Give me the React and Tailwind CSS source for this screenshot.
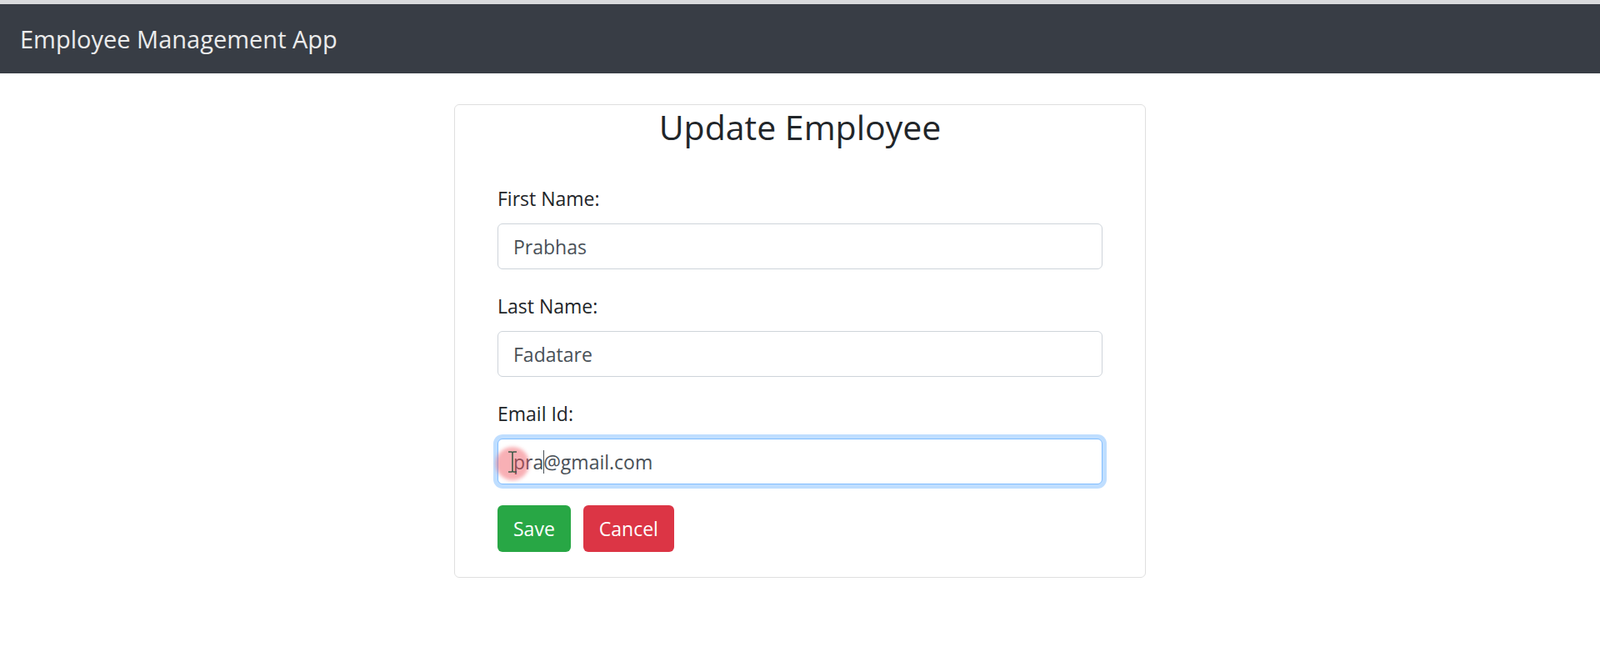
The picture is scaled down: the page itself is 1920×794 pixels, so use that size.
import { useState } from "react";

const Field = ({ label, value, onChange }) => (
  <div className="mb-[27px]">
    <label className="block text-[23px] leading-[35px] mb-[12px] text-[#212529]">{label}</label>
    <input
      type="text"
      value={value}
      onChange={onChange}
      className="w-full h-[55px] px-[18px] text-[23px] text-[#495057] bg-white border border-[#ced4da] rounded-[6px] outline-none"
    />
  </div>
);

const App = () => {
  const [firstName, setFirstName] = useState("Prabhas");
  const [lastName, setLastName] = useState("Fadatare");
  const [emailId, setEmailId] = useState("pra@gmail.com");

  return (
    <div className="min-h-screen bg-white font-['Open_Sans','Noto_Sans',sans-serif]">
      <div className="h-[5px] bg-[#d9dadc]" />

      {/* navbar */}
      <header className="h-[83px] bg-[#383d45] flex items-center px-[24px]">
        <span className="text-[29px] text-white/90">Employee Management App</span>
      </header>

      <main className="pt-[37px] flex justify-center">
        <div className="w-[830px] border border-black/[.125] rounded-[6px] px-[22px]">
          <h3 className="text-center text-[41px] leading-[52px] text-[#212529] mb-[10px]">Update Employee</h3>
          <div className="px-[29px] pt-[33px] pb-[30px]">
            <form onSubmit={(e) => e.preventDefault()}>
              <Field label="First Name:" value={firstName} onChange={(e) => setFirstName(e.target.value)} />
              <Field label="Last Name:" value={lastName} onChange={(e) => setLastName(e.target.value)} />

              <div className="mb-[25px]">
                <label className="block text-[23px] leading-[35px] mb-[12px] text-[#212529]">Email Id:</label>
                <div className="relative">
                  <input
                    type="text"
                    value={emailId}
                    onChange={(e) => setEmailId(e.target.value)}
                    className="w-full h-[55px] px-[18px] text-[23px] text-[#495057] bg-white border border-[#80bdff] rounded-[6px] outline-none shadow-[0_0_0_5px_rgba(0,123,255,0.25)]"
                  />
                  {/* caret after "pra" */}
                  <div className="absolute inset-y-0 left-[19px] flex items-center pointer-events-none text-[23px]">
                    <span className="invisible">pra</span>
                    <span className="w-px h-[28px] bg-[#495057]" />
                  </div>
                  {/* click highlight + I-beam cursor */}
                  <div className="absolute left-[-2px] top-[10px] w-[40px] h-[40px] rounded-full bg-[rgba(240,80,90,0.45)] blur-[2px] pointer-events-none" />
                  <svg className="absolute left-[12px] top-[15px] pointer-events-none" width="12" height="26" viewBox="0 0 12 26">
                    <path d="M1 1h4l1 1 1-1h4M6 2v22M1 25h4l1-1 1 1h4" fill="none" stroke="#3f5a48" strokeWidth="1.6" />
                  </svg>
                </div>
              </div>

              <div className="flex gap-[15px]">
                <button className="h-[56px] px-[19px] text-[23px] text-white bg-[#28a745] rounded-[6px]">Save</button>
                <button type="button" className="h-[56px] px-[19px] text-[23px] text-white bg-[#dc3545] rounded-[6px]">Cancel</button>
              </div>
            </form>
          </div>
        </div>
      </main>
    </div>
  );
};

export default App;
